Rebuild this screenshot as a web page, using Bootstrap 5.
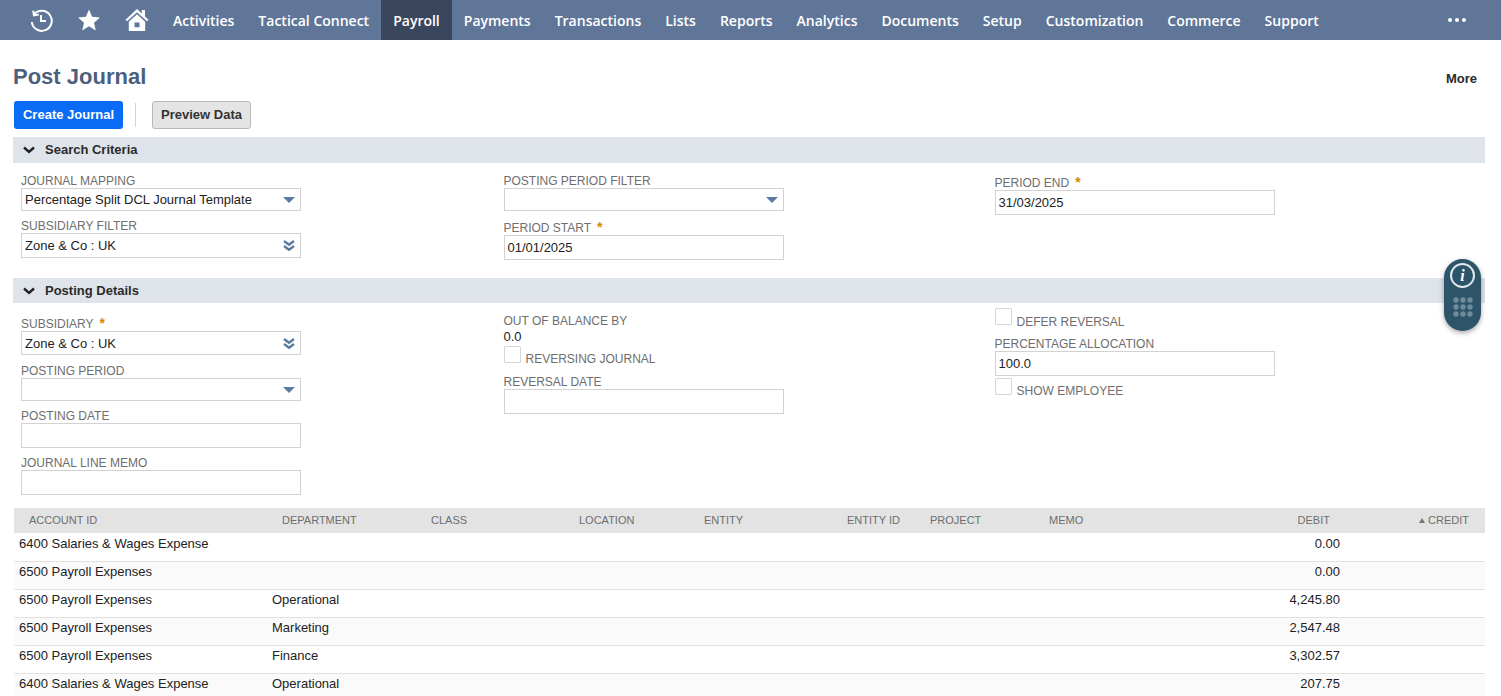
<!DOCTYPE html>
<html lang="en">
<head>
<meta charset="utf-8">
<title>Post Journal</title>
<link href="https://cdn.jsdelivr.net/npm/bootstrap@5.3.0/dist/css/bootstrap.min.css" rel="stylesheet">
<style>
html,body{overflow:hidden;height:696px;background:#fff}
body{font-family:"Liberation Sans",Arial,sans-serif;font-size:13px;color:#222;position:relative}
.topnav{height:40px;background:#5f7699}
.topnav .ico{display:flex;align-items:center;justify-content:center;height:40px}
.ic1{width:30px;margin-left:26px}
.ic2{width:26px;margin-left:20px}
.ic3{width:26px;margin-left:22px}
.topnav a{font-family:"Open Sans",sans-serif;font-weight:600;font-size:14px;color:#fff;text-decoration:none;height:40px;display:flex;align-items:center;padding:0 12px;white-space:nowrap}
.topnav a.first{margin-left:11px}
.topnav a.on{background:#3a465d}
.dots{margin-left:auto;margin-right:35px;display:flex;gap:3px}
.dots i{width:4px;height:4px;border-radius:50%;background:#fff;display:block}
.ttl{margin:23px 24px 0 13px;height:28px}
.ttl h1{font-size:22px;font-weight:700;color:#4d5f7c;margin:0;line-height:28px}
.ttl span{font-size:13px;font-weight:700;color:#2a2a2a;margin-top:4px}
.bar{margin:10px 0 0 14px;height:28px}
.b1{background:#0a6cf5;color:#fff;border:0;font-size:13px;font-weight:700;width:109px;height:28px;border-radius:3px;padding:0;font-family:inherit}
.sep{width:1px;height:24px;background:#d4d4d4;margin:0 16px 0 12px}
.b2{background:#e4e4e4;color:#333;border:1px solid #b9b9b9;font-size:13px;font-weight:700;width:99px;height:28px;border-radius:3px;padding:0;font-family:inherit}
.sect{margin:8px 16px 0 13px;height:26px;background:#dfe3ea;font-weight:700;font-size:13px;color:#2b2b2b;padding-left:10px;gap:10px}
.sect.two{margin-top:18px;height:25px}
.fields{display:grid;grid-template-columns:482.5px 491px 280px;padding-left:21px}
.fld{display:block;width:280px}
.fl{display:block;font-size:12px;line-height:15px;margin-bottom:-1px;color:#6e6e6e;text-transform:uppercase;white-space:nowrap}
.fl b{color:#d28a00;font-weight:700;font-size:14px;margin-left:6px;line-height:10px}
.bx{height:25px;border:1px solid #d2d2d2;background:#fff;font-size:13px;color:#222;padding:0 3px;line-height:21px;white-space:nowrap;display:flex;align-items:center;justify-content:space-between}
.bx.sl{height:23px}
.bx.s24{height:24px}
.bx svg{margin-right:2px;flex:none}
.cb{width:17px;height:17px;border:1px solid #d6d6d6;border-radius:1px;background:#fff;display:block;flex:none}
.ckr{height:18px}
.ckl{font-size:12px;color:#6e6e6e;line-height:14px;text-transform:uppercase;padding-left:5px;padding-top:6px;white-space:nowrap}
.ckl.low{padding-top:7px}
.val{font-size:13px;line-height:15px;color:#222;margin-top:1px}
.m2{margin-top:2px}.m5{margin-top:5px}.m8{margin-top:8px}.m9{margin-top:9px}.m10{margin-top:10px}.m11{margin-top:11px}.m13{margin-top:13px}.m14{margin-top:14px}
.dtab{margin:13px 16px 0 14px;width:1471px;table-layout:fixed;border-collapse:collapse}
.dtab th{background:#e3e3e3;height:25px;font-size:11px;font-weight:400;color:#6e6e6e;padding:0 0 0 15px;text-transform:uppercase;white-space:nowrap}
.dtab td{height:28px;font-size:13px;color:#222;padding:2px 5px 0;vertical-align:top;line-height:15px;border-bottom:1px solid #e2e2e2;white-space:nowrap}
.dtab tbody tr:first-child td{padding-top:3px}
.dtab tbody tr:nth-child(even) td{background:#fafafa}
.dtab td.rt{text-align:right}
.dtab th.rt{text-align:right;padding:0 15px 0 0}
.dtab th.cr{text-align:right;padding:0 16px 0 0}
.c1{width:253px}.c2{width:149px}.c3{width:148px}.c4{width:125px}.c5{width:143px}.c6{width:83px}.c7{width:119px}.c8{width:175px}.c9{width:136px}.c10{width:140px}
.tri{display:inline-block;width:0;height:0;border-left:3px solid transparent;border-right:3px solid transparent;border-bottom:5px solid #777;margin-right:3px;vertical-align:1px}
.pill{position:absolute;left:1444px;top:259px;width:37px;height:72px;border-radius:19px;background:#2d5468;box-shadow:0 2px 5px rgba(0,0,0,.35);display:flex;flex-direction:column;align-items:center;padding-top:4px}
.pill .circ{width:25px;height:25px;border:2px solid #dfe8ec;border-radius:50%;color:#fff;font-family:"Liberation Serif",serif;font-style:italic;font-weight:700;font-size:16px;line-height:21px;text-align:center}
</style>
</head>
<body>
<nav class="topnav d-flex align-items-center">
  <span class="ico ic1"><svg width="24" height="24" viewBox="0 0 24 24" fill="none" stroke="#fff" stroke-width="2"><path d="M5 6.500A10 10 0 1 1 2.800 14"/><path d="M4.200 2.600 5 7.400l4.700-.8"/><path d="M12 7v6h5"/></svg></span>
  <span class="ico ic2"><svg width="24" height="24" viewBox="0 0 24 24" fill="#fff"><path d="M12 1.500l3.100 7.300 7.900.7-6 5.200 1.800 7.800L12 18.300 5.200 22.500 7 14.700 1 9.500l7.900-.7z"/></svg></span>
  <span class="ico ic3"><svg width="26" height="24" viewBox="0 0 26 24" fill="#fff"><path d="M13 1 1.500 11.800l1.600 1.500L13 4.200l9.900 9.100 1.600-1.500-3.500-3.300V2h-3.200v3.600z"/><path d="M13 6.300 4.800 13.800V23h16.400v-9.200zM10.500 14.500h5v4.800h-5z" fill-rule="evenodd"/></svg></span>
  <a class="first" href="#">Activities</a>
  <a href="#">Tactical Connect</a>
  <a class="on" href="#">Payroll</a>
  <a href="#">Payments</a>
  <a href="#">Transactions</a>
  <a href="#">Lists</a>
  <a href="#">Reports</a>
  <a href="#">Analytics</a>
  <a href="#">Documents</a>
  <a href="#">Setup</a>
  <a href="#">Customization</a>
  <a href="#">Commerce</a>
  <a href="#">Support</a>
  <span class="dots"><i></i><i></i><i></i></span>
</nav>

<div class="ttl d-flex justify-content-between align-items-center">
  <h1>Post Journal</h1><span>More</span>
</div>
<div class="bar d-flex align-items-center">
  <button class="b1" type="button">Create Journal</button>
  <span class="sep"></span>
  <button class="b2" type="button">Preview Data</button>
</div>

<div class="sect d-flex align-items-center">
  <svg width="12" height="8" viewBox="0 0 12 8" fill="none" stroke="#222" stroke-width="2.400"><path d="M1 1.500 6 6l5-4.500"/></svg>
  <span>Search Criteria</span>
</div>
<div class="fields">
  <div>
    <label class="fld m11"><span class="fl">Journal Mapping</span>
      <span class="bx sl">Percentage Split DCL Journal Template <svg width="12" height="6" viewBox="0 0 12 6"><path d="M0 0h12L6 6z" fill="#5b7ba3"/></svg></span></label>
    <label class="fld m8"><span class="fl">Subsidiary Filter</span>
      <span class="bx">Zone &amp; Co : UK <svg width="12" height="11" viewBox="0 0 12 11" fill="none" stroke="#5b7ba3" stroke-width="2.400"><path d="M1 1l5 3.800L11 1M1 6l5 3.800L11 6"/></svg></span></label>
  </div>
  <div>
    <label class="fld m11"><span class="fl">Posting Period Filter</span>
      <span class="bx sl"><span></span><svg width="12" height="6" viewBox="0 0 12 6"><path d="M0 0h12L6 6z" fill="#5b7ba3"/></svg></span></label>
    <label class="fld m10"><span class="fl">Period Start<b>*</b></span>
      <span class="bx">01/01/2025</span></label>
  </div>
  <div>
    <label class="fld m13"><span class="fl">Period End<b>*</b></span>
      <span class="bx">31/03/2025</span></label>
  </div>
</div>

<div class="sect two d-flex align-items-center">
  <svg width="12" height="8" viewBox="0 0 12 8" fill="none" stroke="#222" stroke-width="2.400"><path d="M1 1.500 6 6l5-4.500"/></svg>
  <span>Posting Details</span>
</div>
<div class="fields">
  <div>
    <label class="fld m14"><span class="fl">Subsidiary<b>*</b></span>
      <span class="bx s24">Zone &amp; Co : UK <svg width="12" height="11" viewBox="0 0 12 11" fill="none" stroke="#5b7ba3" stroke-width="2.400"><path d="M1 1l5 3.800L11 1M1 6l5 3.800L11 6"/></svg></span></label>
    <label class="fld m9"><span class="fl">Posting Period</span>
      <span class="bx sl"><span></span><svg width="12" height="6" viewBox="0 0 12 6"><path d="M0 0h12L6 6z" fill="#5b7ba3"/></svg></span></label>
    <label class="fld m8"><span class="fl">Posting Date</span>
      <span class="bx"></span></label>
    <label class="fld m8"><span class="fl">Journal Line Memo</span>
      <span class="bx"></span></label>
  </div>
  <div>
    <div class="fld m11"><span class="fl">Out of Balance By</span><div class="val">0.0</div></div>
    <div class="d-flex ckr m2"><span class="cb"></span><span class="ckl">Reversing Journal</span></div>
    <label class="fld m11"><span class="fl">Reversal Date</span>
      <span class="bx"></span></label>
  </div>
  <div>
    <div class="d-flex ckr m5"><span class="cb"></span><span class="ckl low">Defer Reversal</span></div>
    <label class="fld m11"><span class="fl">Percentage Allocation</span>
      <span class="bx">100.0</span></label>
    <div class="d-flex ckr m2"><span class="cb"></span><span class="ckl">Show Employee</span></div>
  </div>
</div>

<table class="dtab">
  <colgroup><col class="c1"><col class="c2"><col class="c3"><col class="c4"><col class="c5"><col class="c6"><col class="c7"><col class="c8"><col class="c9"><col class="c10"></colgroup>
  <thead><tr><th>Account ID</th><th>Department</th><th>Class</th><th>Location</th><th>Entity</th><th>Entity ID</th><th>Project</th><th>Memo</th><th class="rt">Debit</th><th class="cr"><span class="tri"></span>Credit</th></tr></thead>
  <tbody>
    <tr><td>6400 Salaries &amp; Wages Expense</td><td></td><td></td><td></td><td></td><td></td><td></td><td></td><td class="rt">0.00</td><td></td></tr>
    <tr><td>6500 Payroll Expenses</td><td></td><td></td><td></td><td></td><td></td><td></td><td></td><td class="rt">0.00</td><td></td></tr>
    <tr><td>6500 Payroll Expenses</td><td>Operational</td><td></td><td></td><td></td><td></td><td></td><td></td><td class="rt">4,245.80</td><td></td></tr>
    <tr><td>6500 Payroll Expenses</td><td>Marketing</td><td></td><td></td><td></td><td></td><td></td><td></td><td class="rt">2,547.48</td><td></td></tr>
    <tr><td>6500 Payroll Expenses</td><td>Finance</td><td></td><td></td><td></td><td></td><td></td><td></td><td class="rt">3,302.57</td><td></td></tr>
    <tr><td>6400 Salaries &amp; Wages Expense</td><td>Operational</td><td></td><td></td><td></td><td></td><td></td><td></td><td class="rt">207.75</td><td></td></tr>
  </tbody>
</table>
<div class="pill">
  <div class="circ">i</div>
  <svg class="mt-2" width="22" height="22" viewBox="0 0 22 22" fill="#6f8c9b"><circle cx="4" cy="4" r="2.700"/><circle cx="11" cy="4" r="2.700"/><circle cx="18" cy="4" r="2.700"/><circle cx="4" cy="11" r="2.700"/><circle cx="11" cy="11" r="2.700"/><circle cx="18" cy="11" r="2.700"/><circle cx="4" cy="18" r="2.700"/><circle cx="11" cy="18" r="2.700"/><circle cx="18" cy="18" r="2.700"/></svg>
</div>
</body>
</html>
